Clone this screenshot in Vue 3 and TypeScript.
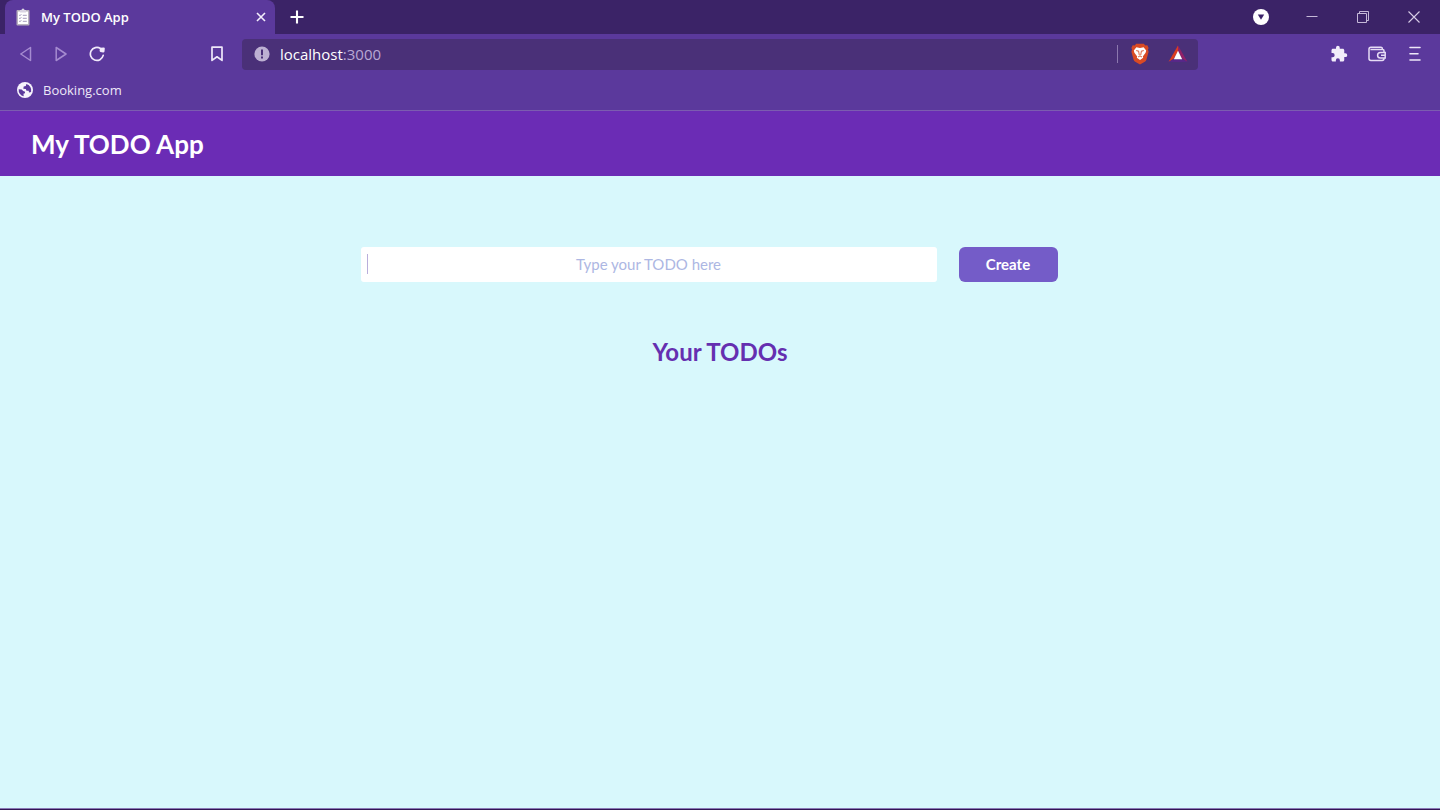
<script setup lang="ts">
import { ref } from 'vue'

const appTitle = 'My TODO App'
const draft = ref('')
const todos = ref<string[]>([])

function createTodo() {
  const text = draft.value.trim()
  if (!text) return
  todos.value.push(text)
  draft.value = ''
}
</script>

<template>
  <div class="window">
    <div class="tab-strip">
      <div class="tab">
        <svg class="tab-icon" width="14" height="18" viewBox="0 0 14 18" aria-hidden="true">
          <rect x="0.5" y="2" width="13" height="15.5" rx="1" fill="#b9b2bd" />
          <rect x="2" y="3.5" width="10" height="12.5" fill="#fff" />
          <path d="M4 4.5V2h1.5a1.5 1.5 0 0 1 3 0H10v2.5z" fill="#d9d4e2" />
          <path d="M3.2 7l.8.8 1.3-1.6M3.2 10l.8.8 1.3-1.6M3.2 13l.8.8 1.3-1.6M6.8 7.3h4M6.8 10.3h4M6.8 13.3h4" fill="none" stroke="#9a8eb4" stroke-width="0.9" />
        </svg>
        <span class="tab-title">{{ appTitle }}</span>
        <button class="icon-button" type="button" aria-label="Close tab">
          <svg width="10" height="10" viewBox="0 0 10 10"><path d="M1 1l8 8M9 1l-8 8" stroke="#f4effc" stroke-width="1.6" /></svg>
        </button>
      </div>
      <button class="icon-button new-tab" type="button" aria-label="New tab">
        <svg width="14" height="14" viewBox="0 0 14 14"><path d="M7 0.5v13M0.5 7h13" stroke="#fff" stroke-width="2.1" /></svg>
      </button>
      <div class="window-controls">
        <button class="icon-button tab-search" type="button" aria-label="Search tabs">
          <svg width="16" height="16" viewBox="0 0 16 16"><circle cx="8" cy="8" r="8" fill="#fff" /><path d="M4.8 5.5h6.4L8 10.8z" fill="#3b2369" /></svg>
        </button>
        <button class="icon-button" type="button" aria-label="Minimize">
          <svg width="12" height="12" viewBox="0 0 12 12"><path d="M0.5 5.5h11" stroke="#c5b9d8" /></svg>
        </button>
        <button class="icon-button" type="button" aria-label="Restore">
          <svg width="12" height="12" viewBox="0 0 12 12"><path d="M0.5 2.5h9v9h-9zM2.5 2.5v-2h9v9h-2" fill="none" stroke="#c5b9d8" /></svg>
        </button>
        <button class="icon-button" type="button" aria-label="Close window">
          <svg width="12" height="12" viewBox="0 0 12 12"><path d="M0.5 0.5l11 11M11.5 0.5l-11 11" stroke="#d8cde6" stroke-width="1.1" /></svg>
        </button>
      </div>
    </div>

    <div class="toolbar">
      <div class="toolbar-side navigation">
        <button class="icon-button" type="button" aria-label="Back">
          <svg width="12" height="16" viewBox="0 0 12 16"><path d="M10.5 1.5v13L0.8 8z" fill="none" stroke="#a58bd0" stroke-width="1.5" stroke-linejoin="round" /></svg>
        </button>
        <button class="icon-button forward" type="button" aria-label="Forward">
          <svg width="12" height="16" viewBox="0 0 12 16"><path d="M1.2 1.5v13L11 8z" fill="none" stroke="#a58bd0" stroke-width="1.5" stroke-linejoin="round" /></svg>
        </button>
        <button class="icon-button reload" type="button" aria-label="Reload">
          <svg width="16" height="16" viewBox="0 0 16 16"><path d="M11.6 2.6A6.5 6.5 0 1 0 14.2 9.4" fill="none" stroke="#f1eafb" stroke-width="1.7" stroke-linecap="round" /><path d="M11 1.8l3.8-.3q1 0 1 1l-.3 3q-.3 1.2-1.5 1l-2.6-.6q-1-.5-.8-1.4z" fill="#f1eafb" /></svg>
        </button>
        <button class="icon-button bookmark" type="button" aria-label="Bookmark this page">
          <svg width="12" height="16" viewBox="0 0 12 16"><path d="M1 1.2h10v13.2l-5-3.6-5 3.6z" fill="none" stroke="#eee7f9" stroke-width="1.7" stroke-linejoin="round" /></svg>
        </button>
      </div>

      <div class="address-bar">
        <svg width="16" height="16" viewBox="0 0 16 16" aria-hidden="true"><circle cx="8" cy="8" r="7.6" fill="#bdb0d2" /><path d="M8 3.6v5.6M8 10.6v2" stroke="#4a3078" stroke-width="2" /></svg>
        <span class="address"><span class="host">localhost</span>:3000</span>
        <span class="divider"></span>
        <button class="icon-button" type="button" aria-label="Brave Shields">
          <svg width="18" height="22" viewBox="0 0 18 22">
            <path d="M5.2 0.8h7.6l1.5 1.7 2-.2 1.3 2.6-.7 1.7.7 2.1-2.2 8.1q-.5 1.3-1.6 2L9 21.4l-4.8-2.6q-1.1-.7-1.6-2L.4 8.7l.7-2.1L.4 4.9l1.3-2.6 2 .2z" fill="#d94a24" />
            <path d="M5.4 4.2L9 4.9l3.6-.7 2.6 3.2-.6 2.4-2.8 3.6.4 1.4L9 17l-3.2-2.2.4-1.4-2.8-3.6-.6-2.4z" fill="#fff" />
            <path d="M5.2 7.4l2.4.8.7 3.8M12.8 7.4l-2.4.8-.7 3.8M7.2 14l1.8-1.1 1.8 1.1" fill="none" stroke="#df7150" stroke-width="1.1" />
          </svg>
        </button>
        <button class="icon-button rewards" type="button" aria-label="Brave Rewards">
          <svg width="20" height="18" viewBox="0 0 20 18">
            <path d="M10 0.5L0.5 17l5.3-3.2L10 6.2z" fill="#dc3c20" />
            <path d="M10 0.5L19.5 17l-5.3-3.2L10 6.2z" fill="#922168" />
            <path d="M0.5 17h19l-5.3-3.2H5.8z" fill="#572788" />
            <path d="M10 5.7l4.2 8.6H5.8z" fill="#fff" />
          </svg>
        </button>
      </div>

      <div class="toolbar-side actions">
        <button class="icon-button" type="button" aria-label="Extensions">
          <svg width="18" height="18" viewBox="0 0 24 24"><path d="M20.5 11H19V7c0-1.1-.9-2-2-2h-4V3.5a2.5 2.5 0 0 0-5 0V5H4c-1.1 0-2 .9-2 2v3.8h1.5a2.7 2.7 0 0 1 0 5.4H2V20c0 1.1.9 2 2 2h3.8v-1.5a2.7 2.7 0 0 1 5.4 0V22H17c1.1 0 2-.9 2-2v-4h1.5a2.5 2.5 0 0 0 0-5z" fill="#f2edfa" /></svg>
        </button>
        <button class="icon-button wallet" type="button" aria-label="Wallet">
          <svg width="18" height="16" viewBox="0 0 18 16"><path d="M16 6V4.8q0-1.3-1.3-1.3H2.4M16 12v.6q0 1.9-1.9 1.9H2.9Q1 14.5 1 12.6V3.2q0-1.9 1.9-1.9h10.2q1.4 0 1.4 1.9" fill="none" stroke="#e6dcf5" stroke-width="1.5" /><path d="M17.2 6.4h-4.8a2.8 2.8 0 0 0 0 5.6h4.8zM17 9.2h-4" fill="none" stroke="#e6dcf5" stroke-width="1.5" /></svg>
        </button>
        <button class="icon-button" type="button" aria-label="Menu">
          <svg width="12" height="16" viewBox="0 0 12 16"><path d="M1 1.5h10M1 7.7h8M1 14h10" stroke="#eee8f8" stroke-width="1.6" stroke-linecap="round" /></svg>
        </button>
      </div>
    </div>

    <nav class="bookmarks" aria-label="Bookmarks">
      <a class="bookmark-link" href="#booking">
        <svg width="16" height="16" viewBox="0 0 16 16" aria-hidden="true">
          <circle cx="8" cy="8" r="8" fill="#f7f3fc" />
          <path d="M9.3 2.1L8.8 4 6.7 4.5 6.3 6.7 8.8 7l.7 1.7 2.2.1.3 1.8 2.1-.7A6.4 6.4 0 0 0 9.3 2.1zM1.7 7.2l3 .3 1.5 1.6 1.9.6-.2 1.6-1.4.5.2 2.5A6.4 6.4 0 0 1 1.7 7.2z" fill="#5b399c" />
        </svg>
        Booking.com
      </a>
    </nav>

    <header class="app-header">
      <h1>{{ appTitle }}</h1>
    </header>

    <main>
      <form class="todo-form" @submit.prevent="createTodo">
        <div class="field">
          <input v-model="draft" type="text" aria-label="New TODO" placeholder="Type your TODO here" />
          <span v-if="!draft" class="caret"></span>
        </div>
        <button class="create" type="submit">Create</button>
      </form>
      <h2>Your TODOs</h2>
      <ul v-if="todos.length" class="todos">
        <li v-for="(todo, index) in todos" :key="index">{{ todo }}</li>
      </ul>
    </main>
    <div class="taskbar-edge"></div>
  </div>
</template>

<style>
body {
  margin: 0;
}
</style>

<style scoped>
.window {
  display: flex;
  flex-direction: column;
  min-height: 100vh;
  background: #d8f8fc;
  font-family: "Open Sans", "Noto Sans", sans-serif;
}

svg {
  display: block;
  flex: none;
}

.icon-button {
  display: block;
  flex: none;
  padding: 0;
  border: 0;
  background: none;
  cursor: pointer;
}

.tab-strip {
  display: flex;
  align-items: center;
  height: 34px;
  padding: 0 20px 0 5px;
  background: #3b2367;
}

.tab {
  display: flex;
  align-items: center;
  box-sizing: border-box;
  width: 270px;
  height: 34px;
  padding: 0 9px 0 11px;
  border-radius: 8px 8px 0 0;
  background: #5b399c;
}

.tab-title {
  flex: 1;
  margin-left: 11px;
  color: #fff;
  font-size: 13px;
  font-weight: 600;
}

.new-tab {
  margin-left: 15px;
}

.window-controls {
  display: flex;
  align-items: center;
  gap: 39px;
  margin-left: auto;
}

.tab-search {
  margin-right: -2px;
}

.toolbar {
  display: flex;
  align-items: center;
  height: 40px;
  background: #5b399c;
}

.toolbar-side {
  display: flex;
  align-items: center;
  box-sizing: border-box;
  width: 242px;
}

.navigation {
  padding-left: 20px;
}

.forward {
  margin-left: 23px;
}

.reload {
  margin-left: 22px;
}

.bookmark {
  margin: 0 19px 0 auto;
}

.actions {
  justify-content: flex-end;
  gap: 20px;
  padding-right: 19px;
}

.wallet {
  margin-right: 3px;
}

.address-bar {
  display: flex;
  flex: 1;
  align-items: center;
  box-sizing: border-box;
  height: 31px;
  padding: 0 10px 0 12px;
  border-radius: 4px;
  background: #4a3078;
}

.address {
  flex: 1;
  margin-left: 10px;
  color: #b8a8d4;
  font-size: 15px;
}

.host {
  color: #fff;
}

.divider {
  width: 1px;
  height: 18px;
  margin-right: 13px;
  background: #8c78ae;
}

.rewards {
  margin-left: 19px;
}

.bookmarks {
  display: flex;
  align-items: flex-start;
  height: 36px;
  padding: 0 17px;
  border-bottom: 1px solid #7c5cb0;
  background: #5b399c;
}

.bookmark-link {
  display: flex;
  align-items: center;
  gap: 10px;
  height: 32px;
  color: #eee8f8;
  font-size: 13px;
  text-decoration: none;
}

.app-header {
  display: flex;
  align-items: center;
  height: 65px;
  padding: 0 31px;
  background: #6b2cb5;
}

h1,
h2,
.todo-form,
.todos {
  font-family: Lato, "Open Sans", sans-serif;
}

h1 {
  margin: 0;
  color: #fff;
  font-size: 26px;
  font-weight: 700;
  line-height: 32px;
}

main {
  flex: 1;
  padding-top: 71px;
}

.todo-form {
  display: flex;
  justify-content: center;
  gap: 22px;
  padding-right: 22px;
}

.field {
  position: relative;
  width: 40vw;
}

input {
  box-sizing: border-box;
  display: block;
  width: 100%;
  height: 35px;
  padding: 0 6px 2px;
  border: 0;
  border-radius: 3px;
  outline: 0;
  background: #fff;
  color: #6b2cb5;
  font: inherit;
  font-size: 15px;
}

input::placeholder {
  color: #adb7e3;
  opacity: 1;
  text-align: center;
}

.caret {
  position: absolute;
  top: 7px;
  left: 6px;
  width: 1px;
  height: 20px;
  background: #b9aedb;
  pointer-events: none;
}

.create {
  width: 99px;
  height: 35px;
  padding: 0 0 2px;
  border: 0;
  border-radius: 6px;
  background: #745cc8;
  color: #fff;
  font: inherit;
  font-size: 15px;
  font-weight: 700;
  cursor: pointer;
}

h2 {
  margin: 54px 0 0;
  color: #652fb0;
  font-size: 24px;
  font-weight: 700;
  line-height: 32px;
  text-align: center;
}

.todos {
  width: 40%;
  margin: 24px auto;
  padding: 0;
  color: #652fb0;
  list-style: none;
}

.taskbar-edge {
  height: 1px;
  border-top: 1px solid #8979b5;
  background: #321553;
}
</style>
